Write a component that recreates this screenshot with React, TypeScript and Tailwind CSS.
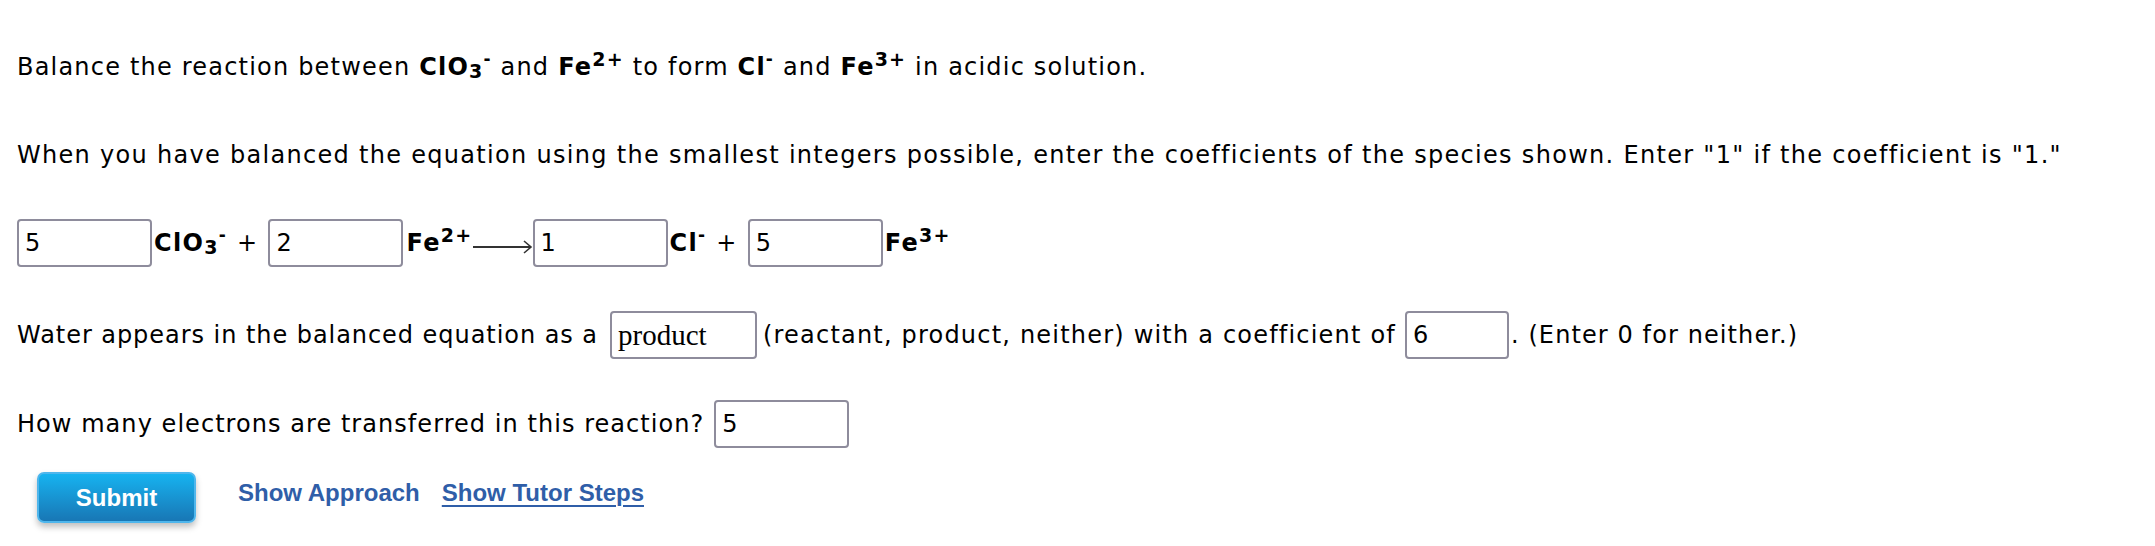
import React from 'react'

const sans = '[font-family:"DejaVu_Sans","Verdana",sans-serif]'

function Box({ value, w = 'w-[135px]', serif = false }: { value: string; w?: string; serif?: boolean }) {
  return (
    <div
      className={`${w} h-[48px] shrink-0 border-2 border-[#8e8c9c] rounded-[4px] bg-white flex items-center pl-[6px] ${
        serif ? 'font-["Liberation_Serif",serif] text-[29px] tracking-normal' : 'text-[24px]'
      } text-black`}
    >
      {value}
    </div>
  )
}

function Arrow() {
  return (
    <svg width="60" height="16" viewBox="0 0 60 16" className="shrink-0 mt-[8px]">
      <line x1="0" y1="8" x2="58" y2="8" stroke="#333" strokeWidth="2" />
      <path d="M51 2 L58 8 L51 14" fill="none" stroke="#333" strokeWidth="1.6" />
    </svg>
  )
}

function Sup({ children }: { children: React.ReactNode }) {
  return <sup className="text-[19px] relative -top-[9px] align-baseline">{children}</sup>
}

function Sub({ children }: { children: React.ReactNode }) {
  return <sub className="text-[19px] relative top-[3px] align-baseline">{children}</sub>
}

function ClO3() {
  return (
    <b>
      ClO<Sub>3</Sub>
      <sup className="text-[17px] relative -top-[10px] align-baseline">-</sup>
    </b>
  )
}

export default function App() {
  return (
    <div
      className={`${sans} w-[2155px] h-[546px] bg-white text-black text-[24px] leading-[29px] tracking-[1.3px] pl-[17px] overflow-hidden`}
    >
      <p className="pt-[53px] tracking-[1.2px]">
        Balance the reaction between <ClO3 /> and{' '}
        <b>
          Fe<Sup>2+</Sup>
        </b>{' '}
        to form{' '}
        <b>
          Cl<sup className="text-[17px] relative -top-[10px] align-baseline">-</sup>
        </b>{' '}
        and{' '}
        <b>
          Fe<Sup>3+</Sup>
        </b>{' '}
        in acidic solution.
      </p>

      <p className="mt-[59px]">
        When you have balanced the equation using the smallest integers possible, enter the coefficients of the species
        shown. Enter "1" if the coefficient is "1."
      </p>

      <div className="mt-[49px] flex items-center">
        <Box value="5" />
        <span className="ml-[2px]">
          <ClO3 />
        </span>
        <span className="mx-[10px]">+</span>
        <Box value="2" />
        <b className="ml-[3px]">
          Fe<Sup>2+</Sup>
        </b>
        <Arrow />
        <Box value="1" />
        <b className="ml-[2px]">
          Cl<sup className="text-[17px] relative -top-[10px] align-baseline">-</sup>
        </b>
        <span className="mx-[10px]">+</span>
        <Box value="5" />
        <b className="ml-[2px]">
          Fe<Sup>3+</Sup>
        </b>
      </div>

      <div className="mt-[44px] flex items-center">
        <span className="mr-[12px] tracking-[0.95px]">Water appears in the balanced equation as a</span>
        <Box value="product" w="w-[147px]" serif />
        <span className="ml-[6px] mr-[9px] tracking-[1.2px]">(reactant, product, neither) with a coefficient of</span>
        <Box value="6" w="w-[104px]" />
        <span className="ml-[2px] tracking-[1.1px]">. (Enter 0 for neither.)</span>
      </div>

      <div className="mt-[41px] flex items-center">
        <span className="mr-[10px] tracking-[1.05px]">How many electrons are transferred in this reaction?</span>
        <Box value="5" />
      </div>

      <div className="mt-[24px] flex items-center font-['Liberation_Sans',Arial,sans-serif] font-bold tracking-normal">
        <button className="ml-[20px] w-[159px] h-[51px] rounded-[7px] border-2 border-[#4fb6ec] bg-gradient-to-b from-[#16b3f0] to-[#1877b5] text-white text-[24px] shadow-[0_4px_6px_rgba(0,0,0,0.25)]">
          Submit
        </button>
        <a className="ml-[42px] -mt-[10px] text-[#2f5ea8] text-[24px] cursor-pointer">Show Approach</a>
        <a className="ml-[22px] -mt-[10px] text-[#2f5ea8] text-[24px] underline underline-offset-[4px] decoration-2 cursor-pointer">
          Show Tutor Steps
        </a>
      </div>
    </div>
  )
}
